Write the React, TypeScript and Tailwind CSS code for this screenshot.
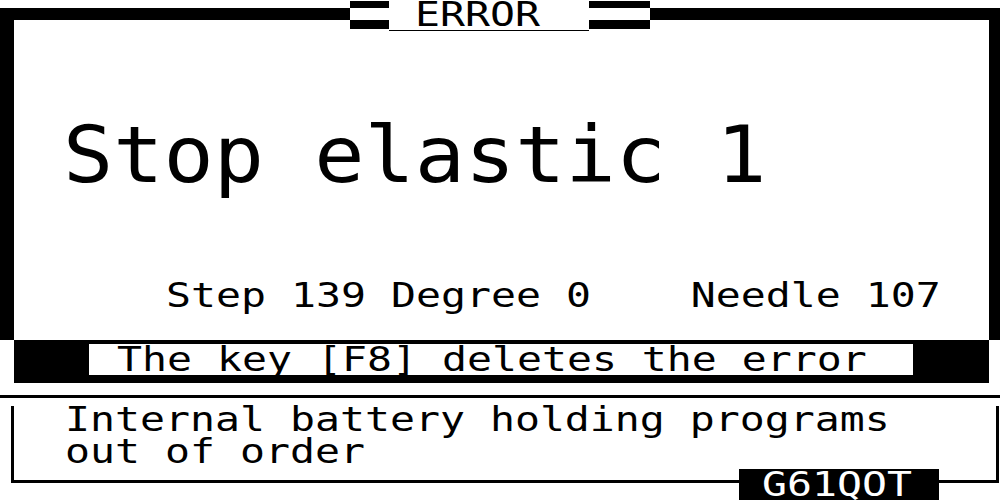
import React from "react";

function Stripes({ w }: { w: string }) {
  return (
    <div className={`${w} h-[31px] flex flex-col`}>
      <div className="h-[1px]" />
      <div className="h-[7px] bg-black" />
      <div className="h-[12px] bg-white" />
      <div className="h-[9px] bg-black" />
    </div>
  );
}

function Small({ children, className = "" }: { children: React.ReactNode; className?: string }) {
  return (
    <span className={`inline-block origin-left scale-x-[1.258] whitespace-pre text-[33px] ${className}`}>
      {children}
    </span>
  );
}

export default function App() {
  return (
    <div className="relative w-[1000px] h-[500px] overflow-hidden bg-white text-black font-['DejaVu_Sans_Mono',monospace]">
      {/* Top panel */}
      <div className="mt-[8px] h-[332px] border-t-[12px] border-l-[14px] border-r-[11px] border-black flex flex-col">
        <div className="mt-[96px] pl-[49px] h-[78px] leading-[78px]">
          <span className="inline-block origin-left scale-x-[1.07] whitespace-pre text-[78px] leading-none">
            Stop elastic 1
          </span>
        </div>
        <div className="mt-[85px] pl-[152px] h-[33px] leading-none">
          <Small className="leading-none">{"Step 139 Degree 0    Needle 107"}</Small>
        </div>
      </div>

      {/* Title overlay */}
      <div className="absolute left-[350px] top-0 flex bg-white">
        <Stripes w="w-[39px]" />
        <div className="w-[200px] h-[31px] border-b border-black bg-white pl-[26px] leading-[30px]">
          <Small className="leading-[30px]">ERROR</Small>
        </div>
        <Stripes w="w-[61px]" />
      </div>

      {/* Message bar */}
      <div className="ml-[14px] mr-[11px] h-[43px] bg-black pt-[4px] pl-[75px]">
        <div className="w-[824px] h-[31px] bg-white pl-[28px] leading-[31px]">
          <Small className="leading-[31px]">The key [F8] deletes the error</Small>
        </div>
      </div>

      {/* Bottom panel */}
      <div className="mt-[12px] border-t-[3px] border-black">
        <div className="mt-[8px] ml-[11px] mr-[1px] h-[77px] border-l-[3px] border-r-[3px] border-b-[3px] border-black pl-[51px] flex flex-col">
          <div className="-mt-[2px] h-[32px] leading-[32px]">
            <Small className="leading-[32px]">Internal battery holding programs</Small>
          </div>
          <div className="h-[32px] leading-[32px]">
            <Small className="leading-[32px]">out of order</Small>
          </div>
        </div>
      </div>

      {/* Status badge */}
      <div className="absolute left-[739px] top-[469px] w-[200px] h-[31px] bg-black text-white pl-[23px] leading-[31px]">
        <Small className="leading-[31px]">G61QOT</Small>
      </div>
    </div>
  );
}
